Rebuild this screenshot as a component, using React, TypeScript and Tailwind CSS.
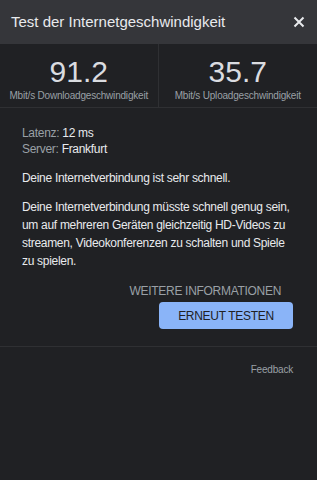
export default function App() {
  return (
    <div className="h-[480px] w-[317px] overflow-hidden bg-[#202124] font-['Liberation_Sans',Arial,sans-serif]">
      {/* Kopfzeile */}
      <div className="flex h-[44px] items-center justify-between bg-[#35363a] pl-[11px] pr-[12px]">
        <h1 className="text-[15px] text-[#e8eaed]">Test der Internetgeschwindigkeit</h1>
        <svg width="12" height="12" viewBox="0 0 12 12">
          <path d="M1.5 1.5 L10.5 10.5 M10.5 1.5 L1.5 10.5" stroke="#e8eaed" strokeWidth="2" />
        </svg>
      </div>

      {/* Messwerte */}
      <div className="grid h-[64px] grid-cols-2 border-b border-[#2f3033]">
        <div className="flex flex-col items-center border-r border-[#2f3033] pt-[13px]">
          <span className="text-[30px] leading-[30px] text-[#dadce0]">91.2</span>
          <span className="mt-[3px] text-[10px] leading-[12px] tracking-[-0.2px] text-[#9aa0a6]">Mbit/s Downloadgeschwindigkeit</span>
        </div>
        <div className="flex flex-col items-center pt-[13px]">
          <span className="text-[30px] leading-[30px] text-[#dadce0]">35.7</span>
          <span className="mt-[3px] text-[10px] leading-[12px] tracking-[-0.2px] text-[#9aa0a6]">Mbit/s Uploadgeschwindigkeit</span>
        </div>
      </div>

      {/* Details */}
      <div className="border-b border-[#2f3033] pb-[17px] pl-[22px] pr-[24px] pt-[17px] text-[12px] tracking-[-0.3px] text-[#e8eaed]">
        <div className="leading-[16px]">
          <p>
            <span className="text-[#9aa0a6]">Latenz: </span>12 ms
          </p>
          <p>
            <span className="text-[#9aa0a6]">Server: </span>Frankfurt
          </p>
        </div>
        <p className="mt-[12px] leading-[18px]">Deine Internetverbindung ist sehr schnell.</p>
        <p className="mt-[11px] leading-[18px]">
          Deine Internetverbindung müsste schnell genug sein, um auf mehreren Geräten gleichzeitig HD-Videos zu streamen, Videokonferenzen zu schalten und Spiele zu spielen.
        </p>
        <div className="mt-[12px] flex flex-col items-end">
          <span className="pr-[12px] leading-[18px] text-[#9aa0a6]">WEITERE INFORMATIONEN</span>
          <button className="mt-[2px] h-[27px] w-[134px] rounded-[4px] bg-[#8ab4f8] text-[12px] tracking-[-0.3px] text-[#202124]">
            ERNEUT TESTEN
          </button>
        </div>
      </div>

      <div className="flex justify-end pr-[24px] pt-[15px]">
        <span className="text-[10px] leading-[15px] tracking-[-0.2px] text-[#9aa0a6]">Feedback</span>
      </div>
    </div>
  );
}
